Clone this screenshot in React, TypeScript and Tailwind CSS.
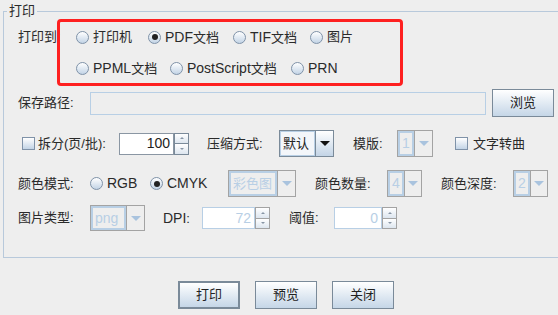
import React from 'react';

const font = "font-['Liberation_Sans','Noto_Sans_CJK_SC',sans-serif]";

// latin runs render a bit larger than the CJK glyphs in the original dialog
function Txt({ children }: { children: string }) {
    const parts = children.split(/([A-Za-z0-9]+)/).filter(Boolean);
    return (
        <span>
            {parts.map((p, i) =>
                /^[A-Za-z0-9]+$/.test(p) ? (
                    <span key={i} className="text-[14px]">
                        {p}
                    </span>
                ) : (
                    <span key={i}>{p}</span>
                )
            )}
        </span>
    );
}

function Radio({ checked }: { checked?: boolean }) {
    return (
        <span className="flex items-center justify-center w-[13px] h-[13px] rounded-full border border-[#7f92a8] bg-gradient-to-b from-white to-[#c3d4e6] shrink-0">
            {checked && <span className="w-[6px] h-[6px] rounded-full bg-[#222]" />}
        </span>
    );
}

function Check() {
    return (
        <span className="w-[13px] h-[13px] border border-[#7f92a8] bg-gradient-to-b from-white to-[#c3d4e6] shrink-0" />
    );
}

function Option({ label, checked, w }: { label: string; checked?: boolean; w?: string }) {
    return (
        <div className={`flex items-center gap-[4px] ${w ?? ''}`}>
            <Radio checked={checked} />
            <Txt>{label}</Txt>
        </div>
    );
}

function Combo({ value, w, disabled }: { value: string; w: string; disabled?: boolean }) {
    if (disabled) {
        return (
            <div className={`flex h-full border border-[#a3a3a3] ${w}`}>
                <div className="flex-1 flex items-center px-[2px] border-2 border-[#b8cfe5] text-[#b8cfe5]">
                    <Txt>{value}</Txt>
                </div>
                <div className="w-[18px] flex items-center justify-center border-l border-[#a3a3a3]">
                    <span className="w-0 h-0 border-x-[5px] border-t-[5px] border-x-transparent border-t-[#a9c3de]" />
                </div>
            </div>
        );
    }
    return (
        <div className={`flex h-full border border-[#7a8a99] ${w}`}>
            <div className="flex-1 flex items-center px-[2px] border border-[#b8cfe5] bg-[#f3f6fa] text-[#222]">
                <Txt>{value}</Txt>
            </div>
            <div className="w-[18px] flex items-center justify-center border-l border-[#7a8a99] bg-gradient-to-b from-white to-[#c3d4e6]">
                <span className="w-0 h-0 border-x-[5px] border-t-[5px] border-x-transparent border-t-[#111]" />
            </div>
        </div>
    );
}

function Spinner({ value, w, disabled }: { value: string; w: string; disabled?: boolean }) {
    const arrowBorder = disabled ? 'border-[#a3a3a3]' : 'border-[#7a8a99]';
    return (
        <div className={`flex h-[22px] ${w}`}>
            <div
                className={`flex-1 flex items-center justify-end pr-[3px] bg-white border ${
                    disabled ? 'border-[#b8cfe5] text-[#b8cfe5]' : 'border-[#8a96a3] text-[#222]'
                }`}
            >
                <Txt>{value}</Txt>
            </div>
            <div className={`w-[15px] flex flex-col border ${arrowBorder}`}>
                <div className={`flex-1 flex items-center justify-center border-b ${arrowBorder} bg-gradient-to-b from-white to-[#dde6ef]`}>
                    <span className="w-0 h-0 border-x-[2px] border-b-[2px] border-x-transparent border-b-[#8795a5]" />
                </div>
                <div className="flex-1 flex items-center justify-center bg-gradient-to-b from-white to-[#dde6ef]">
                    <span className="w-0 h-0 border-x-[2px] border-t-[2px] border-x-transparent border-t-[#8795a5]" />
                </div>
            </div>
        </div>
    );
}

function Button({ label, main }: { label: string; main?: boolean }) {
    return (
        <button
            className={`w-[62px] h-[28px] flex items-center justify-center bg-gradient-to-b from-white to-[#c5d6e7] text-[#222] ${
                main ? 'border-2 border-[#7a8a99]' : 'border border-[#7a8a99]'
            }`}
        >
            {label}
        </button>
    );
}

export default function App() {
    return (
        <div className={`relative w-[558px] h-[315px] overflow-hidden bg-[#eeeeee] text-[13px] text-[#2a2a2a] ${font}`}>
            {/* titled border */}
            <div className="ml-[3px] mt-[11px] w-[570px] h-[247px] border border-[#b8c9db]">
                {/* row 1 */}
                <div className="mt-[15px] h-[20px] pl-[14px] flex items-center">
                    <span className="w-[58px]">打印到:</span>
                    <Option label="打印机" w="w-[72px]" />
                    <Option label="PDF文档" checked w="w-[85px]" />
                    <Option label="TIF文档" w="w-[77px]" />
                    <Option label="图片" />
                </div>

                {/* row 2 */}
                <div className="mt-[11px] h-[20px] pl-[14px] flex items-center">
                    <span className="w-[58px]" />
                    <Option label="PPML文档" w="w-[94px]" />
                    <Option label="PostScript文档" w="w-[121px]" />
                    <Option label="PRN" />
                </div>

                {/* row 3 */}
                <div className="mt-[11px] h-[28px] pl-[14px] flex items-center">
                    <span className="w-[72px]">保存路径:</span>
                    <div className="w-[396px] h-[23px] border border-[#b8cfe5] bg-[#eeeeee]" />
                    <div className="ml-[6px]">
                        <Button label="浏览" />
                    </div>
                </div>

                {/* row 4 */}
                <div className="mt-[13px] h-[27px] pl-[14px] flex items-center">
                    <div className="w-[101px] flex items-center gap-[3px] pl-[4px]">
                        <Check />
                        <span>拆分(页/批):</span>
                    </div>
                    <Spinner value="100" w="w-[70px]" />
                    <span className="ml-[18px] w-[72px]">压缩方式:</span>
                    <Combo value="默认" w="w-[55px]" />
                    <span className="ml-[19px] w-[44px]">模版:</span>
                    <Combo value="1" w="w-[36px]" disabled />
                    <div className="ml-[22px] flex items-center gap-[5px]">
                        <Check />
                        <span>文字转曲</span>
                    </div>
                </div>

                {/* row 5 */}
                <div className="mt-[13px] h-[27px] pl-[14px] flex items-center">
                    <span className="w-[72px]">颜色模式:</span>
                    <Option label="RGB" w="w-[60px]" />
                    <Option label="CMYK" checked w="w-[78px]" />
                    <Combo value="彩色图" w="w-[68px]" disabled />
                    <span className="ml-[19px] w-[72px]">颜色数量:</span>
                    <Combo value="4" w="w-[35px]" disabled />
                    <span className="ml-[19px] w-[72px]">颜色深度:</span>
                    <Combo value="2" w="w-[35px]" disabled />
                </div>

                {/* row 6 */}
                <div className="mt-[8px] h-[26px] pl-[14px] flex items-center">
                    <span className="w-[72px]">图片类型:</span>
                    <Combo value="png" w="w-[55px]" disabled />
                    <span className="ml-[18px] w-[39px]">
                        <Txt>DPI:</Txt>
                    </span>
                    <Spinner value="72" w="w-[68px]" disabled />
                    <span className="ml-[19px] w-[45px]">阈值:</span>
                    <Spinner value="0" w="w-[63px]" disabled />
                </div>
            </div>

            {/* dialog buttons */}
            <div className="mt-[23px] ml-[178px] flex gap-[15px]">
                <Button label="打印" main />
                <Button label="预览" />
                <Button label="关闭" />
            </div>

            {/* border title */}
            <span className="absolute left-[7px] top-[2px] px-[2px] bg-[#eeeeee] leading-[18px]">打印</span>

            {/* annotation */}
            <div className="absolute left-[57px] top-[19px] w-[346px] h-[67px] border-[3px] border-[#fe2020] rounded-[4px]" />
        </div>
    );
}
